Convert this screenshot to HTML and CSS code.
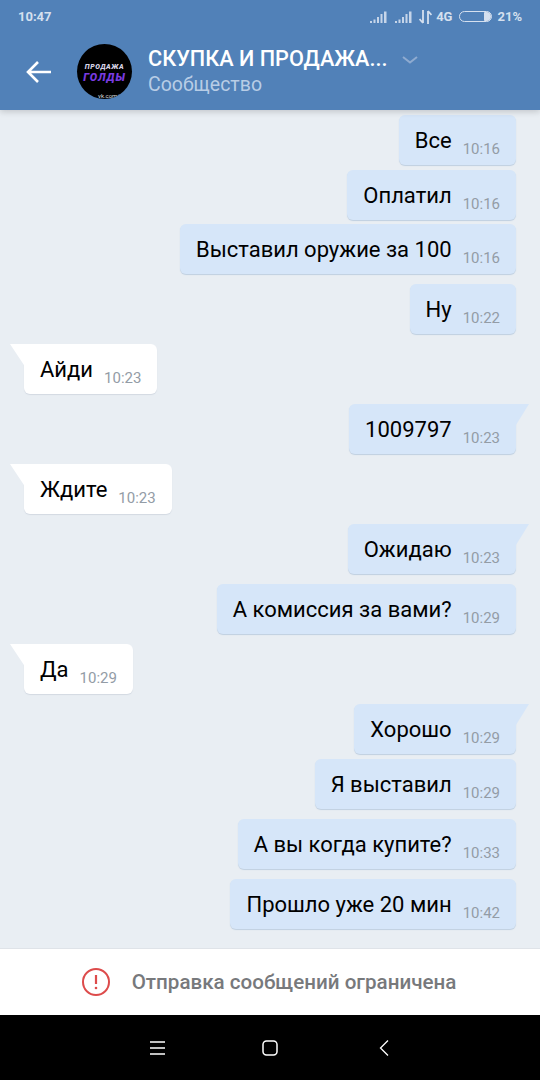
FILE: index.html
```html
<!DOCTYPE html>
<html lang="ru">
<head>
    <meta charset="UTF-8">
    <meta name="viewport" content="width=device-width, initial-scale=1.0">
    <title>Сообщения</title>
    <link rel="stylesheet" href="styles.css">
</head>
<body>

<header class="top">
    <div class="status">
        <span class="clock">10:47</span>
        <div class="status-right">
            <svg class="signal" width="17" height="12" viewBox="0 0 17 12"><path d="M0 10h2v2H0zM3.500 8.500h2V12h-2zM7 6h2v6H7zM10.500 3h2v9h-2zM14 .5h2.500V12H14z" fill="#c6d5e9"/></svg>
            <svg class="signal" width="17" height="12" viewBox="0 0 17 12"><path d="M0 10h2v2H0zM3.500 8.500h2V12h-2zM7 6h2v6H7zM10.500 3h2v9h-2zM14 .5h2.500V12H14z" fill="#c6d5e9"/></svg>
            <svg class="arrows" width="13" height="14" viewBox="0 0 13 14"><path d="M4 0v13M.5 9 4 13M9 14V1M9 1l3.500 4" fill="none" stroke="#d5e0ef" stroke-width="1.800"/></svg>
            <span class="net">4G</span>
            <div class="battery"><div class="battery-level"></div></div>
            <span class="percent">21%</span>
        </div>
    </div>
    <div class="title-bar">
        <svg class="back" width="26" height="22" viewBox="0 0 26 22"><path d="M25 11H2M12 1 2 11l10 10" fill="none" stroke="#fff" stroke-width="2.600"/></svg>
        <div class="avatar">
            <span class="avatar-top">ПРОДАЖА</span>
            <span class="avatar-main">ГОЛДЫ</span>
            <span class="avatar-link">vk.com/</span>
        </div>
        <div class="title-text">
            <div class="title-name">СКУПКА И ПРОДАЖА...</div>
            <div class="title-sub">Сообщество</div>
        </div>
        <svg class="chevron" width="16" height="8" viewBox="0 0 16 8"><path d="M1 1l7 5.500L15 1" fill="none" stroke="#8fabd0" stroke-width="2"/></svg>
    </div>
</header>

<!-- Сообщения -->
<main class="chat">
    <div class="msg out"><span class="text">Все</span><span class="time">10:16</span></div>
    <div class="msg out tight"><span class="text">Оплатил</span><span class="time">10:16</span></div>
    <div class="msg out tight"><span class="text">Выставил оружие за 100</span><span class="time">10:16</span></div>
    <div class="msg out"><span class="text">Ну</span><span class="time">10:22</span></div>
    <div class="msg in tail"><span class="text">Айди</span><span class="time">10:23</span></div>
    <div class="msg out tail"><span class="text">1009797</span><span class="time">10:23</span></div>
    <div class="msg in tail"><span class="text">Ждите</span><span class="time">10:23</span></div>
    <div class="msg out tail"><span class="text">Ожидаю</span><span class="time">10:23</span></div>
    <div class="msg out"><span class="text">А комиссия за вами?</span><span class="time">10:29</span></div>
    <div class="msg in tail"><span class="text">Да</span><span class="time">10:29</span></div>
    <div class="msg out tail"><span class="text">Хорошо</span><span class="time">10:29</span></div>
    <div class="msg out tight"><span class="text">Я выставил</span><span class="time">10:29</span></div>
    <div class="msg out"><span class="text">А вы когда купите?</span><span class="time">10:33</span></div>
    <div class="msg out"><span class="text">Прошло уже 20 мин</span><span class="time">10:42</span></div>
</main>

<div class="notice">
    <svg class="notice-icon" width="30" height="30" viewBox="0 0 30 30"><circle cx="15" cy="15" r="13" fill="none" stroke="#dd4b4b" stroke-width="2"/><path d="M15 8v9" stroke="#dd4b4b" stroke-width="2.200"/><circle cx="15" cy="21" r="1.300" fill="#dd4b4b"/></svg>
    <span class="notice-text">Отправка сообщений ограничена</span>
</div>

<nav class="softkeys">
    <svg width="16" height="16" viewBox="0 0 16 16"><path d="M0 2h15M0 8h15M0 14h15" stroke="#fff" stroke-width="1.300"/></svg>
    <svg width="16" height="16" viewBox="0 0 16 16"><rect x="1" y="1" width="14" height="14" rx="3.500" fill="none" stroke="#fff" stroke-width="1.500"/></svg>
    <svg class="softkey-back" width="10" height="16" viewBox="0 0 10 16"><path d="M9 .5 1.500 8 9 15.500" fill="none" stroke="#fff" stroke-width="1.300"/></svg>
</nav>

</body>
</html>
```

FILE: styles.css
```css
/* Общие стили */
html, body {
    margin: 0;
    padding: 0;
}
body {
    width: 540px;
    height: 1080px;
    display: flex;
    flex-direction: column;
    overflow: hidden;
    font-family: Roboto, "Noto Sans", sans-serif;
    background-color: #e9eef3;
}

/* Шапка */
.top {
    height: 110px;
    flex-shrink: 0;
    background-color: #5181b8;
    box-shadow: 0 2px 6px rgba(0, 0, 0, 0.16);
    position: relative;
    z-index: 2;
}
.status {
    height: 33px;
    padding: 0 18px 0 18px;
    display: flex;
    align-items: center;
    justify-content: space-between;
    font-size: 13px;
    font-weight: 700;
    color: #d5e0ef;
}
.status-right {
    display: flex;
    align-items: center;
}
.signal {
    margin-right: 8px;
}
.signal + .arrows {
    margin-left: -1px;
}
.arrows {
    margin-right: 4px;
}
.net {
    margin-right: 7px;
}
.battery {
    width: 31px;
    height: 9px;
    border: 1px solid #d5e0ef;
    border-radius: 6px;
    margin-right: 5px;
    display: flex;
    justify-content: flex-end;
}
.battery-level {
    width: 7px;
    height: 9px;
    background-color: #d5e0ef;
    border-radius: 1px 5px 5px 1px;
}
.title-bar {
    height: 77px;
    display: flex;
    align-items: center;
    padding-left: 26px;
}
.back {
    flex-shrink: 0;
}
.avatar {
    width: 55px;
    height: 55px;
    margin: 0 0 0 25px;
    border-radius: 50%;
    background-color: #000;
    display: flex;
    flex-direction: column;
    align-items: center;
    position: relative;
    overflow: hidden;
    flex-shrink: 0;
}
.avatar-top {
    margin-top: 19px;
    font-size: 7px;
    line-height: 8px;
    letter-spacing: 0.6px;
    font-weight: 900;
    font-style: italic;
    color: #d8d4e6;
}
.avatar-main {
    font-size: 11px;
    line-height: 13px;
    letter-spacing: 1px;
    font-weight: 900;
    font-style: italic;
    color: #7a3be0;
}
.avatar-link {
    position: absolute;
    bottom: 0;
    left: 21px;
    font-size: 6px;
    line-height: 7px;
    color: #ddd;
    white-space: nowrap;
}
.title-text {
    margin: -2px 0 0 16px;
}
.title-name {
    font-size: 21.700px;
    line-height: 27px;
    font-weight: 500;
    color: #fff;
    white-space: nowrap;
}
.title-sub {
    font-size: 19.500px;
    line-height: 25px;
    color: #b8cde6;
}
.chevron {
    margin: -24px 0 0 14px;
}

/* Сообщения */
.chat {
    flex: 1;
    padding: 5px 24px 0 24px;
    display: flex;
    flex-direction: column;
    align-items: flex-start;
    background-color: #e9eef3;
}
.msg {
    box-sizing: border-box;
    height: 50px;
    margin-top: 10px;
    padding: 0 16px 0 16px;
    display: flex;
    align-items: flex-start;
    position: relative;
    border-radius: 6px;
    white-space: nowrap;
}
.msg:first-child {
    margin-top: 0;
}
.msg.tight {
    margin-top: 4.500px;
}
.msg.out {
    align-self: flex-end;
    background-color: #d6e6f9;
    box-shadow: 0 1px 1px #bfcfe0;
}
.msg.in {
    background-color: #fff;
    box-shadow: 0 1px 1px #d3d9e2;
}
.msg.out.tail {
    border-top-right-radius: 0;
}
.msg.in.tail {
    border-top-left-radius: 0;
}
/* Хвостик сообщения */
.msg.out.tail::after {
    content: "";
    position: absolute;
    top: 0;
    right: -13px;
    width: 14px;
    height: 21px;
    background-color: #d6e6f9;
    clip-path: polygon(0 0, 100% 0, 7% 100%, 0 100%);
}
.msg.in.tail::after {
    content: "";
    position: absolute;
    top: 0;
    left: -14px;
    width: 15px;
    height: 21px;
    background-color: #fff;
    clip-path: polygon(0 0, 100% 0, 100% 100%, 93% 100%);
}
.text {
    font-size: 22px;
    line-height: 52px;
    color: #000;
}
.time {
    margin: 24px 0 0 11px;
    font-size: 15px;
    line-height: 20px;
    color: #939ca6;
}

/* Ограничение */
.notice {
    height: 66px;
    flex-shrink: 0;
    box-sizing: content-box;
    padding-right: 3px;
    width: 537px;
    border-top: 1px solid #dfe3e8;
    background-color: #fff;
    display: flex;
    align-items: center;
    justify-content: center;
    gap: 21px;
}
.notice-text {
    font-size: 20.600px;
    font-weight: 500;
    color: #77797c;
}

/* Кнопки */
.softkeys {
    height: 65px;
    flex-shrink: 0;
    padding-right: 2px;
    background-color: #000;
    display: flex;
    align-items: center;
    justify-content: center;
    gap: 96px;
}
.softkey-back {
    margin-left: 5px;
}
```
